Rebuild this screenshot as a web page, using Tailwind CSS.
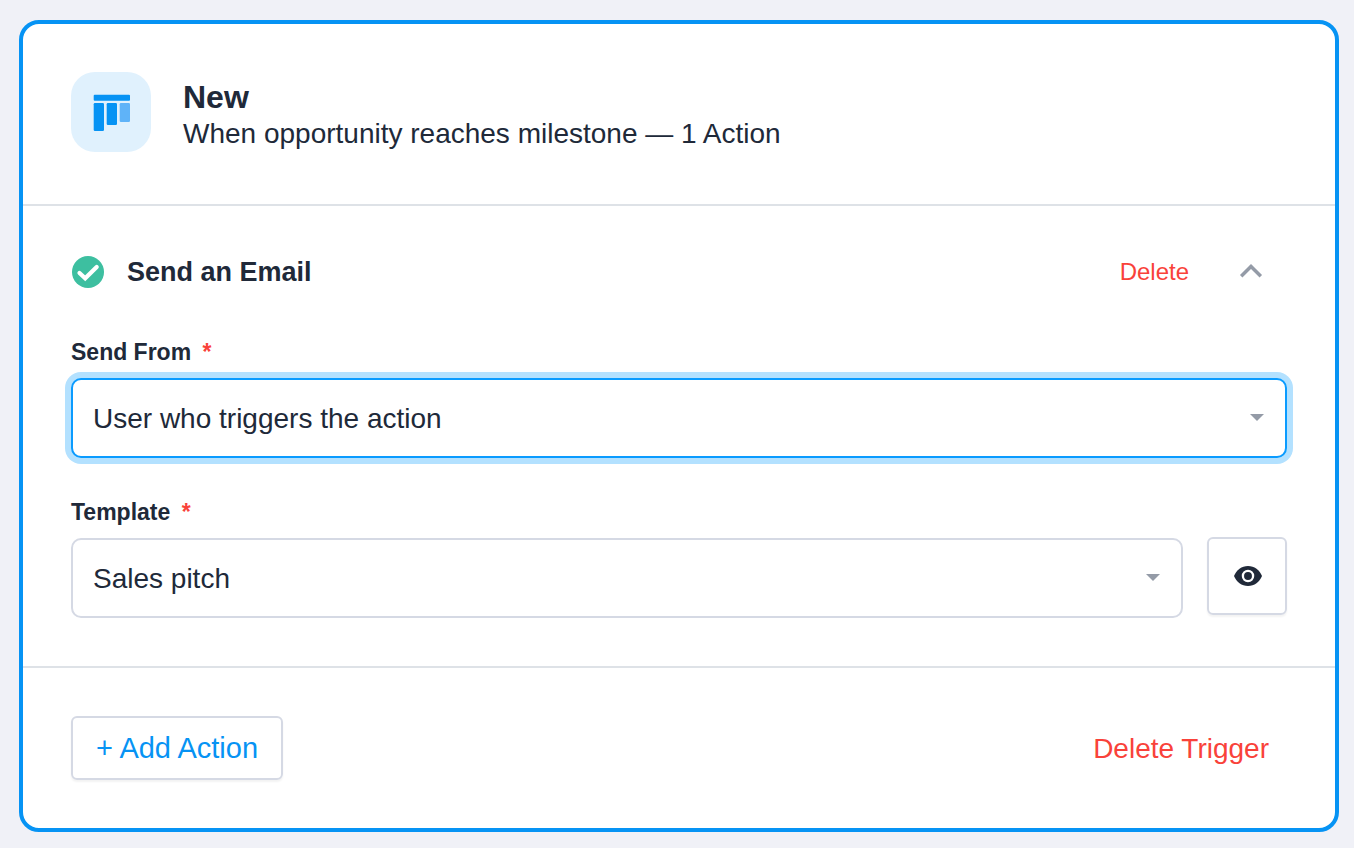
<!DOCTYPE html>
<html lang="en">
<head>
<meta charset="utf-8">
<meta name="viewport" content="width=device-width, initial-scale=1">
<title>Trigger</title>
<script src="https://cdn.jsdelivr.net/npm/@tailwindcss/browser@4"></script>
</head>
<body class="min-h-screen bg-[#f0f1f7] pt-5 pb-4 pl-[19px] pr-[15px] font-['Liberation_Sans',Arial,sans-serif] text-[28px] leading-9 text-[#202939]">
<main class="rounded-[20px] border-4 border-[#0693f4] bg-white">
  <header class="flex items-start gap-8 border-b-2 border-[#dee2e7] px-12 pt-12 pb-[52px]">
    <div class="flex size-20 shrink-0 items-center justify-center rounded-3xl bg-[#e0f1fd]">
      <svg class="size-10" viewBox="0 0 40 40" aria-hidden="true">
        <rect x="2.700" y="2.800" width="36.300" height="6" rx="1" fill="#0693f4"/>
        <rect x="2.700" y="11" width="10.300" height="28" rx="1.200" fill="#0693f4"/>
        <rect x="15.700" y="11" width="10.300" height="22" rx="1.200" fill="#0693f4"/>
        <rect x="28.700" y="11" width="10.300" height="19" rx="1.200" fill="#5fb3f8"/>
      </svg>
    </div>
    <div class="pt-1.5">
      <h1 class="text-[32px] leading-[38px] font-bold">New</h1>
      <p>When opportunity reaches milestone — 1 Action</p>
    </div>
  </header>

  <section class="border-b-2 border-[#dee2e7] p-12">
    <div class="flex h-9 items-center">
      <svg class="ml-px size-8 shrink-0" viewBox="0 0 32 32" aria-hidden="true">
        <circle cx="16" cy="16" r="16" fill="#3dbfa0"/>
        <path d="M7.500 17 13.200 22.300 24.700 10.900" fill="none" stroke="#fff" stroke-width="4.200" stroke-linecap="round" stroke-linejoin="miter"/>
      </svg>
      <h2 class="ml-[23px] grow text-[27px] font-bold">Send an Email</h2>
      <button type="button" class="text-2xl text-[#f9423a]">Delete</button>
      <button type="button" aria-label="Collapse" class="mr-6 ml-[50px] flex h-9 w-6 items-center justify-center">
        <svg class="size-6" viewBox="0 0 24 24" fill="none" stroke="#949ba7" stroke-width="3.500" aria-hidden="true"><path d="M2.200 16.200 12 6.500l9.800 9.700"/></svg>
      </button>
    </div>

    <label for="from" class="mt-[46px] block text-[23px] leading-8 font-bold">Send From <span class="ml-[5px] text-[#f9423a]">*</span></label>
    <div class="mt-2.5 grid items-center">
      <select id="from" class="col-start-1 row-start-1 h-20 w-full appearance-none rounded-[10px] border-2 border-[#0a9bff] bg-white pt-0.5 pr-14 pl-5 ring-6 ring-[#b3e1ff] outline-none">
        <option>User who triggers the action</option>
      </select>
      <svg class="pointer-events-none col-start-1 row-start-1 mr-[23px] h-2 w-3.5 justify-self-end" viewBox="0 0 14 8" aria-hidden="true"><path d="M0 0h14L7 7z" fill="#949ba7"/></svg>
    </div>

    <label for="template" class="mt-[38px] block text-[23px] leading-8 font-bold">Template <span class="ml-[5px] text-[#f9423a]">*</span></label>
    <div class="mt-2.5 flex gap-6">
      <div class="grid grow items-center">
        <select id="template" class="col-start-1 row-start-1 h-20 w-full appearance-none rounded-[10px] border-2 border-[#d5d9e4] bg-white pt-0.5 pr-14 pl-5 outline-none">
          <option>Sales pitch</option>
        </select>
        <svg class="pointer-events-none col-start-1 row-start-1 mr-[23px] h-2 w-3.5 justify-self-end" viewBox="0 0 14 8" aria-hidden="true"><path d="M0 0h14L7 7z" fill="#949ba7"/></svg>
      </div>
      <button type="button" aria-label="Preview template" class="-mt-px flex h-[78px] w-20 shrink-0 items-center justify-center rounded-md border-2 border-[#d5d9e4] pl-0.5 shadow-[0_2px_2px_#0000000d]">
        <svg class="h-5 w-7" viewBox="0 0 28 20" aria-hidden="true">
          <path fill="#202939" d="M14 0C7.700 0 2.300 4.100 0 10c2.300 5.900 7.700 10 14 10s11.700-4.100 14-10C25.700 4.100 20.300 0 14 0Z"/>
          <circle cx="14" cy="10" r="5.100" fill="#202939" stroke="#fff" stroke-width="2.300"/>
        </svg>
      </button>
    </div>
  </section>

  <footer class="flex items-center justify-between p-12">
    <button type="button" class="h-16 rounded-md border-2 border-[#d5d9e4] px-[23px] text-[29px] text-[#0693f4] shadow-[0_2px_2px_#0000000d]">+ Add Action</button>
    <button type="button" class="mr-[18px] pt-0.5 text-[#f9423a]">Delete Trigger</button>
  </footer>
</main>
</body>
</html>
